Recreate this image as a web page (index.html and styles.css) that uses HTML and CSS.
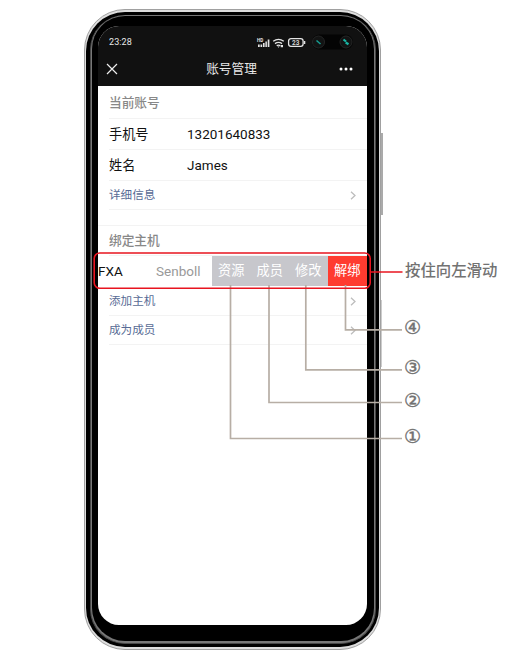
FILE: index.html
```html
<!DOCTYPE html>
<html lang="zh-CN">
<head>
<meta charset="utf-8">
<title>账号管理</title>
<link rel="stylesheet" href="styles.css">
</head>
<body>
<main class="stage">
  <div class="side-key side-key-volume"></div>
  <div class="side-key side-key-power"></div>
  <div class="phone">
    <div class="rim"><div class="bezel"><div class="inner">
      <div class="screen">
        <header class="top">
          <div class="status">
            <span class="time">23:28</span>
            <svg class="signals" width="98" height="16" viewBox="0 0 98 16">
              <g fill="#e4e4e4">
                <text x="0" y="4.800" font-size="4.600" font-weight="700" font-family="Roboto, sans-serif">HD</text>
                <path d="M1 7.500h1.700v2.500H1zM3.500 7.500h1.700V10H3.500zM6 6h1.600v4H6zM8.400 4.500h1.500V10H8.400zM10.700 2.500h1.700v7.500h-1.700z"/>
              </g>
              <g fill="none" stroke="#e4e4e4" stroke-width="1.400">
                <path d="M16.200 4.300q5.300-3.800 10.600 0M18 6.600q3.500-2.500 7 0M19.700 8.700q1.800-1.200 3.600 0"/>
                <rect x="31.600" y="1.600" width="14.500" height="7.800" rx="2.400" stroke-width="1.300"/>
              </g>
              <path d="M20.500 9.500h2l-1 1.300zM23.700 8h2.300v2.300h-2.300zM47 4h1.300v3H47z" fill="#e4e4e4"/>
              <text x="35" y="8" font-size="6.500" font-weight="700" font-family="Roboto, sans-serif" fill="#d0d0d0">23</text>
              <rect x="55" y="-2.500" width="41" height="15" rx="7.500" fill="#040404"/>
              <circle cx="61.500" cy="5" r="6" fill="#121313" stroke="#252626"/>
              <circle cx="89" cy="5" r="6" fill="#121313" stroke="#252626"/>
              <path d="M59.500 3.500l4 3.500" stroke="#16a094" stroke-width="1.500"/>
              <path d="M86.500 2.500l2.500 2M88.700 5.500l2.800 1.800" stroke="#19b5a4" stroke-width="2.200"/>
            </svg>
          </div>
          <div class="nav">
            <svg class="close" width="12" height="12" viewBox="0 0 12 12"><path d="M1 1l10 10M11 1L1 11" stroke="#eee" stroke-width="1.200"/></svg>
            <h1>账号管理</h1>
            <svg class="more" width="14" height="4" viewBox="0 0 14 4" fill="#fff"><circle cx="2" cy="2" r="1.500"/><circle cx="7" cy="2" r="1.500"/><circle cx="12" cy="2" r="1.500"/></svg>
          </div>
        </header>
        <section class="group">
          <h2 class="row heading">当前账号</h2>
          <div class="row field"><span class="label">手机号</span><span>13201640833</span></div>
          <div class="row field"><span class="label">姓名</span><span>James</span></div>
          <div class="row link">详细信息<svg class="chevron" width="6" height="9" viewBox="0 0 6 9"><path d="M1 .7l4 3.800-4 3.800"/></svg></div>
        </section>
        <div class="gap"></div>
        <section class="group">
          <h2 class="row heading hosts">绑定主机</h2>
          <div class="swipe">
            <span class="code">FXA</span><span class="owner">Senboll</span>
            <span class="action">资源</span><span class="action">成员</span><span class="action">修改</span><span class="action unbind">解绑</span>
          </div>
          <div class="row link">添加主机<svg class="chevron" width="6" height="9" viewBox="0 0 6 9"><path d="M1 .7l4 3.800-4 3.800"/></svg></div>
          <div class="row link">成为成员<svg class="chevron" width="6" height="9" viewBox="0 0 6 9"><path d="M1 .7l4 3.800-4 3.800"/></svg></div>
        </section>
      </div>
    </div></div></div>
  </div>
  <svg class="callouts" width="509" height="659" viewBox="0 0 509 659" fill="none">
    <g stroke="#b7aea5" stroke-width="1.700">
      <path d="M230.500 285v153.500H402"/>
      <path d="M269 285v117.500H402"/>
      <path d="M305.800 285v84.800H402"/>
      <path d="M345.500 285v44.800H402"/>
    </g>
    <g stroke="#e8141f" stroke-width="1.600">
      <rect x="94.200" y="253" width="276" height="35.300" rx="5.500"/>
      <path d="M370 272h32.500"/>
    </g>
  </svg>
  <span class="note note-swipe">按住向左滑动</span>
  <span class="note mark note-4">④</span>
  <span class="note mark note-3">③</span>
  <span class="note mark note-2">②</span>
  <span class="note mark note-1">①</span>
</main>
</body>
</html>
```
FILE: styles.css
```css
* { box-sizing: border-box; }
body { margin: 0; background: #fff; font-family: Roboto, "Noto Sans CJK SC", sans-serif; }
.stage { position: relative; width: 509px; height: 659px; overflow: hidden; padding: 9px 0 0 84px; }
.phone { position: relative; width: 297px; height: 641px; border: 1px solid #a0a0a0; border-radius: 41px; background: #dedede; padding: 2px 1px; }
.rim { height: 100%; border-radius: 39px; background: #000; padding: 3px 3px 3px 4px; }
.bezel { height: 100%; border-radius: 35px; background: #777; border: 1px solid #484848; border-top: 0; padding: 1px 1px 2px; }
.inner { height: 100%; border-radius: 33px; background: #000; padding: 10px 7px 16px 6px; }
.screen { height: 100%; border-radius: 21px; background: #fff; overflow: hidden; }
.side-key { position: absolute; left: 381px; width: 2px; background: #aaa; }
.side-key-volume { top: 133px; height: 82px; }
.side-key-power { top: 300px; height: 67px; background: #ccc; width: 1px; }

.top { height: 60px; background: #111; color: #e8e8e8; }
.status { height: 28px; padding: 10px 12px 0 11px; display: flex; justify-content: space-between; }
.time { font-size: 9px; line-height: 12px; letter-spacing: .1px; }
.signals { overflow: visible; margin-top: 1px; }
.nav { height: 29px; padding: 0 14px 0 8px; display: flex; align-items: center; justify-content: space-between; }
.nav h1 { margin: 0 0 0 6px; font-size: 12.700px; font-weight: 400; line-height: 20px; }

.row { height: 29px; margin: 0 0 0 11px; padding-bottom: 1px; display: flex; align-items: center; border-bottom: 1px solid #f3f3f3; white-space: nowrap; }
.heading { height: 33px; color: #888; font-size: 12.700px; font-weight: 500; }
.hosts { height: 30px; padding-bottom: 2px; }
.field { height: 31px; color: #111; font-size: 13.500px; }
.label { width: 78px; font-size: 13.200px; }
.link { color: #576b95; font-size: 11.600px; justify-content: space-between; padding-right: 11px; padding-bottom: 2px; }
.chevron { fill: none; stroke: #bdbdbd; stroke-width: 1.300; position: relative; top: 1px; }
.gap { height: 16px; border-bottom: 1px solid #f3f3f3; }
.swipe { height: 31px; padding-bottom: 1px; display: flex; align-items: center; font-size: 13.500px; color: #111; white-space: nowrap; }
.code { width: 58px; padding-bottom: 1px; }
.owner { width: 56px; padding-bottom: 1px; color: #999; }
.action { width: 38.500px; height: 30px; line-height: 30px; font-size: 13.200px; text-align: center; background: #c7c7cc; color: #fff; }
.unbind { flex: 1; background: #ff3b30; }

.callouts { position: absolute; left: 0; top: 0; }
.note { position: absolute; left: 405px; font-size: 15.400px; line-height: 20px; font-weight: 500; color: #727272; font-family: "Noto Sans CJK SC", sans-serif; white-space: nowrap; }
.mark { left: 404px; font-family: "DejaVu Sans", sans-serif; font-size: 19px; font-weight: 400; -webkit-text-stroke: .4px #727272; }
.note-swipe { top: 259px; }
.note-4 { top: 317px; }
.note-3 { top: 357px; }
.note-2 { top: 390px; }
.note-1 { top: 426px; }
```
